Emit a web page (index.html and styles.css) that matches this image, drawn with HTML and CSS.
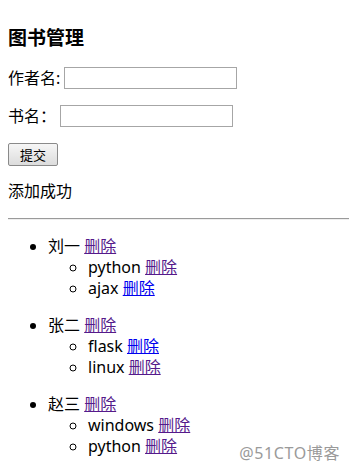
FILE: index.html
```html
<!DOCTYPE html>
<html lang="zh">
<head>
  <meta charset="UTF-8" />
  <title>图书管理</title>
  <link rel="stylesheet" href="styles.css">
</head>
<body>
  <h3 class="title">图书管理</h3>

  <form class="book-form">
    <p class="form-row">作者名:<input type="text" class="text-input"></p>
    <p class="form-row">书名：<input type="text" class="text-input"></p>
    <p class="form-row"><button type="button" class="submit-btn">提交</button></p>
  </form>

  <p class="message">添加成功</p>
  <div class="divider"></div>

  <ul class="author-list">
    <li>刘一 <a href="#" class="visited">删除</a>
      <ul class="book-list">
        <li>python <a href="#" class="visited">删除</a></li>
        <li>ajax <a href="#">删除</a></li>
      </ul>
    </li>
  </ul>

  <ul class="author-list">
    <li>张二 <a href="#" class="visited">删除</a>
      <ul class="book-list">
        <li>flask <a href="#">删除</a></li>
        <li>linux <a href="#" class="visited">删除</a></li>
      </ul>
    </li>
  </ul>

  <ul class="author-list">
    <li>赵三 <a href="#" class="visited">删除</a>
      <ul class="book-list">
        <li>windows <a href="#" class="visited">删除</a></li>
        <li>python <a href="#" class="visited">删除</a></li>
      </ul>
    </li>
  </ul>

  <div class="watermark">@51CTO博客</div>
</body>
</html>
```

FILE: styles.css
```css
html {
  overflow: hidden;
}

body {
  margin: 8px 0 8px 8px;
  font-family: "Noto Sans", "Noto Sans CJK SC", sans-serif;
  font-size: 16px;
  line-height: 21px;
  color: #000;
  background: #fff;
}

.title {
  font-size: 19px;
  font-weight: 700;
  line-height: 22px;
  margin: 18.7px 0;
}

.book-form {
  margin: 0;
}

.form-row {
  margin: 16px 0;
  display: flex;
  align-items: center;
  height: 22px;
}

.text-input {
  width: 173px;
  height: 22px;
  box-sizing: border-box;
  border: 1px solid #a6a6a6;
  margin-left: 4px;
  padding: 1px 2px;
  font-size: 14px;
}

.submit-btn {
  width: 50px;
  height: 23px;
  box-sizing: border-box;
  border: 1px solid #8a8a8a;
  border-radius: 2px;
  background: linear-gradient(#f6f6f6, #dcdcdc);
  font-family: inherit;
  font-size: 13px;
  padding: 0;
  color: #000;
}

.message {
  margin: 16px 0;
}

.divider {
  margin: 16px 0;
  height: 1px;
  background: #9a9a9a;
  border-bottom: 1px solid #eee;
}

.author-list {
  margin: 16px 0;
  padding-left: 40px;
  list-style: disc;
}

.book-list {
  margin: 0;
  padding-left: 40px;
  list-style: circle;
}

a {
  color: #0000ee;
}

a.visited {
  color: #551a8b;
}

.watermark {
  position: absolute;
  right: 9px;
  bottom: 8px;
  font-size: 16px;
  line-height: 20px;
  color: #9a9a9a;
  letter-spacing: 0.6px;
}
```
